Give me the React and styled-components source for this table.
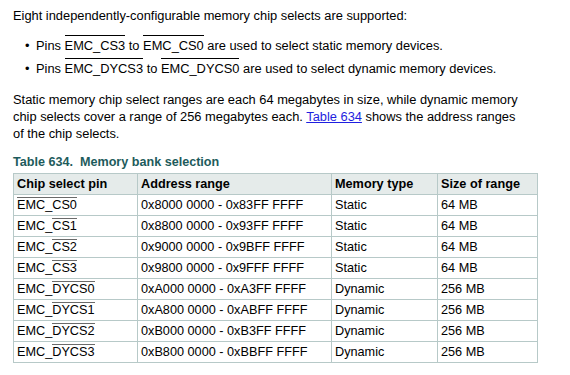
import React from 'react';
import styled, { createGlobalStyle } from 'styled-components';

const Global = createGlobalStyle`
  body {
    margin: 0;
    background: #fff;
    font-family: "Liberation Sans", Arial, sans-serif;
    color: #000;
  }
`;

const Page = styled.div`
  padding: 7px 13px 0 13px;
  font-size: 12.85px;
  line-height: 17px;
`;

const Para = styled.p`
  margin: 0;
`;

const BulletList = styled.ul`
  margin: 13px 0 0 0;
  padding: 0 0 0 23px;
  list-style: none;
  display: flex;
  flex-direction: column;
  gap: 6px;
`;

const Bullet = styled.li`
  position: relative;
  &::before {
    content: '•';
    position: absolute;
    left: -11px;
    top: 0;
  }
`;

const Bar = styled.span`
  position: relative;
  &::before {
    content: '';
    position: absolute;
    left: 0;
    right: 0;
    top: ${p => (p.small ? '-1px' : '-3px')};
    height: 1px;
    background: ${p => (p.small ? '#6a6a6a' : '#000')};
  }
`;

const Body = styled(Para)`
  margin-top: 14px;
`;

const Link = styled.a`
  color: #1f1fe0;
  text-decoration: underline;
`;

const Caption = styled.div`
  margin-top: 12px;
  font-weight: bold;
  font-size: 12.6px;
  line-height: 16px;
  color: #1d5b5c;
`;

const Table = styled.table`
  margin-top: 3px;
  border-collapse: collapse;
  table-layout: fixed;
  width: 524px;
  font-size: 12.7px;
  line-height: 15px;
`;

const Th = styled.th`
  background: #e5ebea;
  text-align: left;
  font-weight: bold;
  border: 1px solid #b7c9c8;
  height: 20px;
  padding: 0 3px;
  width: ${p => p.w}px;
`;

const Td = styled.td`
  border: 1px solid #b7c9c8;
  height: 20px;
  padding: 0 3px;
  white-space: nowrap;
`;

const cols = [
  { label: 'Chip select pin', w: 117 },
  { label: 'Address range', w: 187 },
  { label: 'Memory type', w: 99 },
  { label: 'Size of range', w: 93 },
];

const rows = [
  ['EMC_', 'CS0', '0x8000 0000 - 0x83FF FFFF', 'Static', '64 MB', true],
  ['EMC_', 'CS1', '0x8800 0000 - 0x93FF FFFF', 'Static', '64 MB'],
  ['EMC_', 'CS2', '0x9000 0000 - 0x9BFF FFFF', 'Static', '64 MB'],
  ['EMC_', 'CS3', '0x9800 0000 - 0x9FFF FFFF', 'Static', '64 MB'],
  ['EMC_', 'DYCS0', '0xA000 0000 - 0xA3FF FFFF', 'Dynamic', '256 MB'],
  ['EMC_', 'DYCS1', '0xA800 0000 - 0xABFF FFFF', 'Dynamic', '256 MB'],
  ['EMC_', 'DYCS2', '0xB000 0000 - 0xB3FF FFFF', 'Dynamic', '256 MB'],
  ['EMC_', 'DYCS3', '0xB800 0000 - 0xBBFF FFFF', 'Dynamic', '256 MB'],
];

export default function App() {
  return (
    <Page>
      <Global />
      <Para>Eight independently-configurable memory chip selects are supported:</Para>
      <BulletList>
        <Bullet>Pins <Bar>EMC_CS3</Bar> to <Bar>EMC_CS0</Bar> are used to select static memory devices.</Bullet>
        <Bullet>Pins <Bar>EMC_DYCS3</Bar> to <Bar>EMC_DYCS0</Bar> are used to select dynamic memory devices.</Bullet>
      </BulletList>
      <Body>
        Static memory chip select ranges are each 64 megabytes in size, while dynamic memory<br />
        chip selects cover a range of 256 megabytes each. <Link href="#">Table 634</Link> shows the address ranges<br />
        of the chip selects.
      </Body>
      <Caption>Table 634.&nbsp; Memory bank selection</Caption>
      <Table>
        <thead>
          <tr>
            {cols.map(c => <Th key={c.label} w={c.w}>{c.label}</Th>)}
          </tr>
        </thead>
        <tbody>
          {rows.map(r => (
            <tr key={r[1]}>
              <Td>{r[5] ? <Bar small>{r[0] + r[1]}</Bar> : <>{r[0]}<Bar small>{r[1]}</Bar></>}</Td>
              <Td>{r[2]}</Td>
              <Td>{r[3]}</Td>
              <Td>{r[4]}</Td>
            </tr>
          ))}
        </tbody>
      </Table>
    </Page>
  );
}
